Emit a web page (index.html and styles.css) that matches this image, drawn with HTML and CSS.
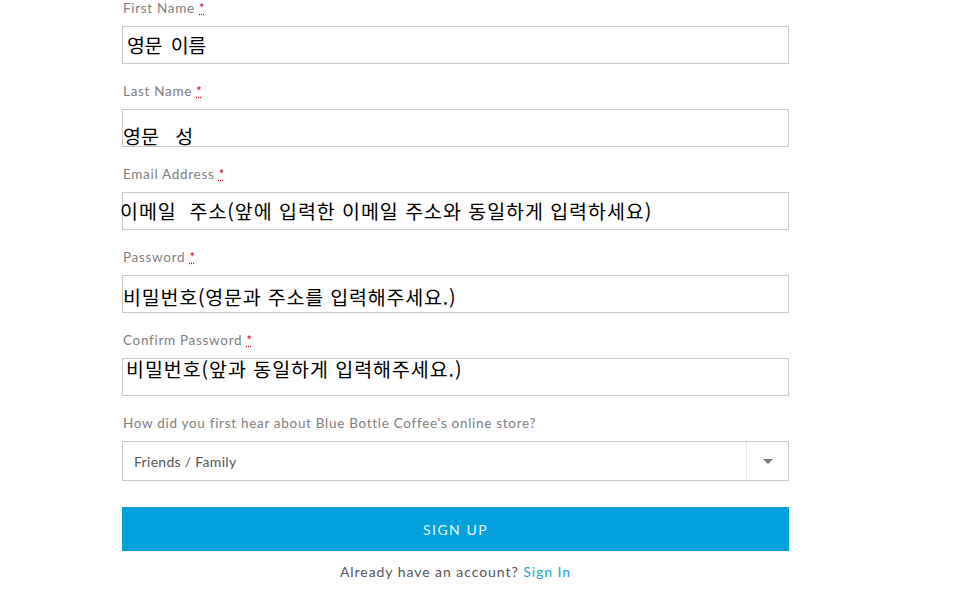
FILE: index.html
```html
<!DOCTYPE html>
<html lang="ko">
<head>
<meta charset="utf-8">
<title>Sign Up</title>
<link rel="stylesheet" href="styles.css">
</head>
<body>
<form class="signup">
  <div class="field">
    <label class="label">First Name <abbr class="req" title="required">*</abbr></label>
    <div class="box"><span class="val v-first">영문 이름</span></div>
  </div>
  <div class="field">
    <label class="label">Last Name <abbr class="req" title="required">*</abbr></label>
    <div class="box"><span class="val v-last">영문   성</span></div>
  </div>
  <div class="field">
    <label class="label">Email Address <abbr class="req" title="required">*</abbr></label>
    <div class="box"><span class="val v-email">이메일  주소(앞에 입력한 이메일 주소와 동일하게 입력하세요)</span></div>
  </div>
  <div class="field">
    <label class="label">Password <abbr class="req" title="required">*</abbr></label>
    <div class="box"><span class="val v-pass">비밀번호(영문과 주소를 입력해주세요.)</span></div>
  </div>
  <div class="field">
    <label class="label">Confirm Password <abbr class="req" title="required">*</abbr></label>
    <div class="box"><span class="val v-confirm">비밀번호(앞과 동일하게 입력해주세요.)</span></div>
  </div>
  <div class="field field-select">
    <label class="label">How did you first hear about Blue Bottle Coffee's online store?</label>
    <div class="select">
      <span class="select-text">Friends / Family</span>
      <span class="select-arrow"><span class="tri"></span></span>
    </div>
  </div>
  <button type="button" class="btn">SIGN UP</button>
  <p class="signin">Already have an account? <a href="#" class="signin-link">Sign In</a></p>
</form>
</body>
</html>
```
FILE: styles.css
```css
html, body {
  margin: 0;
  padding: 0;
  background: #fff;
}
body {
  font-family: "Lato", "Liberation Sans", sans-serif;
}
.signup {
  width: 667px;
  margin-left: 122px;
  display: flex;
  flex-direction: column;
}
.field {
  display: flex;
  flex-direction: column;
  margin-bottom: 19px;
}
.label {
  display: block;
  height: 16px;
  line-height: 16px;
  font-size: 13.5px;
  letter-spacing: 0.7px;
  color: #808080;
  margin-bottom: 10px;
  padding-left: 1px;
  white-space: nowrap;
}
.req {
  color: #d0021b;
  text-decoration: underline dotted #d0021b;
  font-size: 13px;
}
.box {
  box-sizing: border-box;
  height: 38px;
  border: 1px solid #c9c9c9;
  display: flex;
  align-items: center;
}
.val {
  font-family: "Noto Sans CJK KR", sans-serif;
  font-size: 19.5px;
  line-height: 20px;
  color: #000;
  white-space: pre;
}
.v-first { margin-left: 4px; letter-spacing: -0.5px; word-spacing: 4px; }
.v-last { margin-left: 0; margin-top: 16px; }
.v-email { margin-left: -3px; letter-spacing: 0.95px; }
.v-pass { margin-left: 0; margin-top: 6px; letter-spacing: 0.8px; }
.v-confirm { margin-left: 3px; margin-bottom: 16px; letter-spacing: 0.95px; }

.field-select { margin-bottom: 26px; }
.select {
  box-sizing: border-box;
  height: 40px;
  border: 1px solid #c9c9c9;
  display: flex;
  align-items: stretch;
}
.select-text {
  flex: 1;
  display: flex;
  align-items: center;
  padding-left: 11px;
  font-size: 14px;
  letter-spacing: 0.3px;
  color: #555;
}
.select-arrow {
  width: 41px;
  border-left: 1px solid #e6e6e6;
  display: flex;
  align-items: center;
  justify-content: center;
}
.tri {
  width: 0;
  height: 0;
  border-left: 5px solid transparent;
  border-right: 5px solid transparent;
  border-top: 5px solid #777;
}
.btn {
  height: 44px;
  border: 0;
  background: #00a1dd;
  color: #e8f6fc;
  font-family: "Lato", "Liberation Sans", sans-serif;
  font-size: 14px;
  letter-spacing: 1.5px;
  padding: 0;
  margin: 0;
}
.signin {
  margin: 13px 0 0;
  text-align: center;
  font-size: 14px;
  line-height: 16px;
  letter-spacing: 0.95px;
  color: #555;
}
.signin-link {
  color: #2a9fd8;
  text-decoration: none;
}
```
